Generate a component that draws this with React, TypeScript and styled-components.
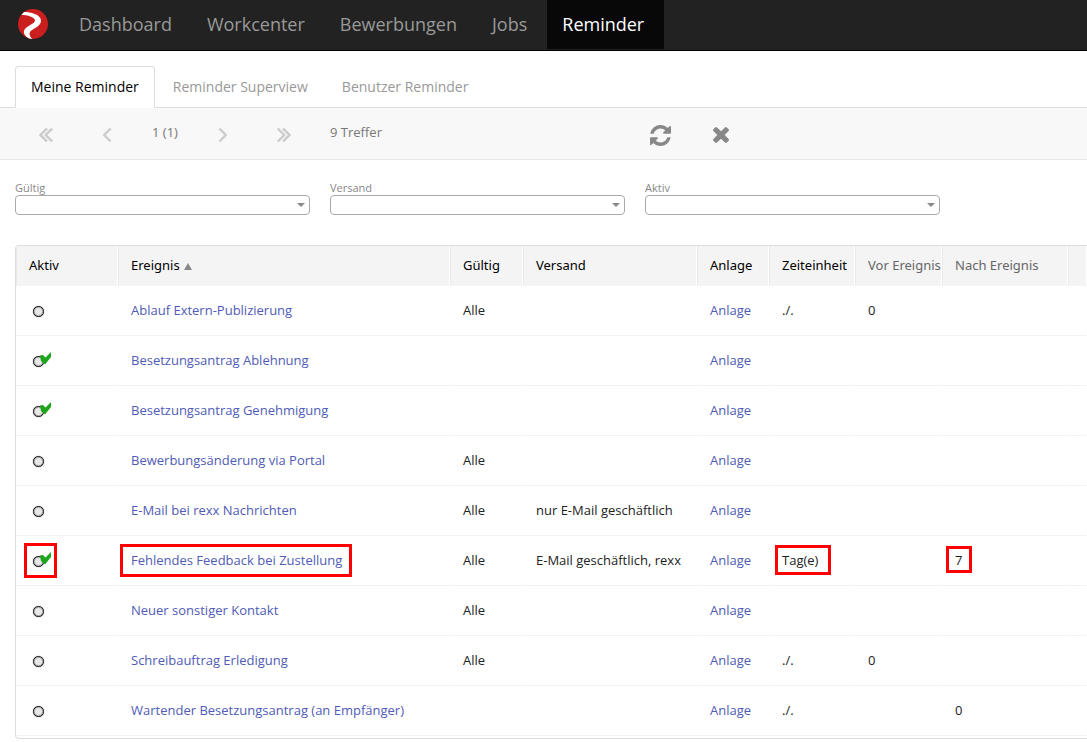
import React from "react";
import styled, { createGlobalStyle } from "styled-components";

const GlobalStyle = createGlobalStyle`
  * { box-sizing: border-box; }
  body {
    margin: 0;
    background: #fff;
    color: #222;
    font-family: "Open Sans", "Noto Sans", sans-serif;
    font-size: 13px;
    line-height: 20px;
    overflow-x: hidden;
  }
`;

const NavBar = styled.nav`
  display: flex;
  height: 51px;
  background: #222;
  border-bottom: 1px solid #000;
`;

const Brand = styled.a`
  display: flex;
  width: 64px;
  padding: 9px 0 0 18px;
`;

const NavLink = styled.a<{ $active?: boolean }>`
  height: 49px;
  padding: 0 20px 0 15px;
  font-size: 18px;
  line-height: 49px;
  font-weight: ${(p) => (p.$active ? 500 : 400)};
  text-decoration: none;
  white-space: nowrap;
  color: ${(p) => (p.$active ? "#fff" : "#999")};
  background: ${(p) => (p.$active ? "#080808" : "transparent")};
`;

const TabBar = styled.div`
  display: flex;
  gap: 2px;
  padding: 15px 15px 0;
  border-bottom: 1px solid #ddd;
`;

const Tab = styled.button<{ $active?: boolean }>`
  height: 42px;
  margin: 0 0 -1px;
  padding: 0 15px;
  border: 1px solid ${(p) => (p.$active ? "#ddd" : "transparent")};
  border-bottom-color: ${(p) => (p.$active ? "#fff" : "transparent")};
  border-radius: 4px 4px 0 0;
  background: ${(p) => (p.$active ? "#fff" : "transparent")};
  color: ${(p) => (p.$active ? "#000" : "#999")};
  font-family: inherit;
  font-size: 14px;
  line-height: 20px;
  cursor: pointer;
`;

const Toolbar = styled.div`
  display: grid;
  grid-template-columns: 62px 60px 56px 60px 62px 315px 60px 62px;
  align-items: center;
  height: 52px;
  padding: 0 15px;
  background: #f8f8f8;
  border-bottom: 1px solid #e7e7e7;
  color: #777;
`;

const IconButton = styled.button<{ $muted?: boolean }>`
  display: flex;
  align-items: center;
  justify-content: center;
  height: 52px;
  padding: 2px 0 0;
  border: 0;
  background: none;
  color: ${(p) => (p.$muted ? "#ccc" : "#888")};
  cursor: pointer;
`;

const PageInfo = styled.span`
  padding-bottom: 4px;
  text-align: center;
`;

const HitCount = styled.span`
  padding: 0 0 4px 15px;
`;

const Filters = styled.form`
  display: flex;
  gap: 20px;
  padding: 21px 15px 30px;
`;

const Filter = styled.label`
  display: block;
  flex: 0 1 295px;
  color: #888;
  font-size: 11px;
  line-height: 14px;
`;

const SelectBox = styled.span`
  display: block;
  position: relative;
`;

const Select = styled.select`
  display: block;
  width: 100%;
  height: 20px;
  padding: 0 20px 0 6px;
  border: 1px solid #aaa;
  border-radius: 4px;
  background: #fff;
  appearance: none;
`;

const SelectArrow = styled.svg`
  position: absolute;
  right: 5px;
  top: 8px;
  pointer-events: none;
`;

const TableFrame = styled.div`
  margin-left: 15px;
  padding-bottom: 2px;
  border: 1px solid #ddd;
  border-right: 0;
  border-radius: 4px 0 0 4px;
  overflow: hidden;
`;

const Table = styled.table`
  width: 100%;
  table-layout: fixed;
  border-collapse: separate;
  border-spacing: 0;
`;

const HeadCell = styled.th<{ $muted?: boolean }>`
  height: 40px;
  padding: 0 0 2px 12px;
  border-left: 1px solid #e9e9e9;
  border-right: 1px solid #fff;
  border-bottom: 1px solid #f4f4f4;
  background: #f4f4f4;
  color: ${(p) => (p.$muted ? "#666" : "#000")};
  font-family: "Noto Sans", "Open Sans", sans-serif;
  font-weight: 400;
  text-align: left;
  white-space: nowrap;
  overflow: hidden;
`;

const SortArrow = styled.svg`
  margin-left: 4px;
`;

const Cell = styled.td`
  position: relative;
  height: 50px;
  padding: 0 0 2px 13px;
  border-right: 1px solid #fff;
  border-bottom: 1px solid #f2f2f2;
  white-space: nowrap;
`;

const TableLink = styled.a`
  color: #4f5bb5;
  text-decoration: none;
`;

const Toggle = styled.span`
  display: block;
  position: relative;
  width: 12px;
  height: 12px;
  margin: 4px 0 0 4px;
`;

const ToggleInput = styled.input`
  display: block;
  width: 11px;
  height: 11px;
  margin: 0;
  border: 1px solid #222;
  border-radius: 50%;
  background: #e8e8e8;
  box-shadow: inset 0 0 0 1px #b4b4b4, 0 0 1px #444;
  appearance: none;
`;

const CheckMark = styled.svg`
  position: absolute;
  left: 7px;
  top: -4px;
  pointer-events: none;
`;

const Marker = styled.span<{ $x: number; $y: number; $w: number; $h: number }>`
  position: absolute;
  left: ${(p) => p.$x}px;
  top: ${(p) => p.$y}px;
  width: ${(p) => p.$w}px;
  height: ${(p) => p.$h}px;
  border: 3px solid #f00;
  pointer-events: none;
`;

const ANGLE =
  "M627 160q0-13-10-23l-50-50q-10-10-23-10t-23 10l-466 466q-10 10-10 23t10 23l466 466q10 10 23 10t23-10l50-50q10-10 10-23t-10-23l-393-393 393-393q10-10 10-23z";
const REFRESH =
  "M1511 480q0-5-1-7-64-268-268-434.5t-478-166.5q-146 0-282.5 55t-243.5 157l-129-129q-19-19-45-19t-45 19-19 45v448q0 26 19 45t45 19h448q26 0 45-19t19-45-19-45l-137-137q71-66 161-102t187-36q134 0 250 65t186 179q11 17 53 117 8 23 30 23h192q13 0 22.5-9.5t9.5-22.5zM1536 1280v-448q0-26-19-45t-45-19h-448q-26 0-45 19t-19 45 19 45l138 138q-148 137-349 137-134 0-250-65t-186-179q-11-17-53-117-8-23-30-23h-199q-13 0-22.5 9.5t-9.5 22.5v7q65 268 270 434.5t480 166.5q146 0 284-55.5t245-156.5l130 129q19 19 45 19t45-19 19-45z";
const TIMES =
  "M1298 214q0-40-28-68l-136-136q-28-28-68-28t-68 28l-294 294-294-294q-28-28-68-28t-68 28l-136 136q-28 28-28 68t28 68l294 294-294 294q-28 28-28 68t28 68l136 136q28 28 68 28t68-28l294-294 294 294q28 28 68 28t68-28l136-136q28-28 28-68t-28-68l-294-294 294-294q28-28 28-68z";

function Angle({ right, double }: { right?: boolean; double?: boolean }) {
  const centre = (double ? 533 : 341) * (right ? -1 : 1);
  return (
    <svg
      width="14"
      height="14"
      viewBox={`${centre - 512} -1088 1024 1024`}
      fill="currentColor"
      stroke="currentColor"
      strokeWidth="50"
    >
      <g transform={right ? "scale(-1 -1)" : "scale(1 -1)"}>
        <path d={ANGLE} />
        {double && <path d={ANGLE} transform="translate(384 0)" />}
      </g>
    </svg>
  );
}

function Logo() {
  return (
    <svg width="30" height="30" viewBox="0 0 30 30">
      <circle cx="15" cy="15" r="15" fill="#cb1f1f" />
      <path
        d="M6 3C12 3 23 5 23 12C23 18 12.500 20 11.500 24C11.500 27 13 29 14.500 30L11 29.500C7 27 5.500 25 6 22C7 17 17 15 17 11.500C17 8 9 6 3.500 6Z"
        fill="#fff"
      />
    </svg>
  );
}

type Mark = [number, number, number, number];
type Row = {
  active?: boolean;
  event: string;
  valid?: string;
  send?: string;
  unit?: string;
  before?: string;
  after?: string;
  marks?: { active: Mark; event: Mark; unit: Mark; after: Mark };
};

const rows: Row[] = [
  { event: "Ablauf Extern-Publizierung", valid: "Alle", unit: "./.", before: "0" },
  { active: true, event: "Besetzungsantrag Ablehnung" },
  { active: true, event: "Besetzungsantrag Genehmigung" },
  { event: "Bewerbungsänderung via Portal", valid: "Alle" },
  { event: "E-Mail bei rexx Nachrichten", valid: "Alle", send: "nur E-Mail geschäftlich" },
  {
    active: true,
    event: "Fehlendes Feedback bei Zustellung",
    valid: "Alle",
    send: "E-Mail geschäftlich, rexx",
    unit: "Tag(e)",
    after: "7",
    marks: {
      active: [8, 7, 33, 35],
      event: [2, 8, 232, 33],
      unit: [6, 9, 56, 30],
      after: [4, 10, 26, 27],
    },
  },
  { event: "Neuer sonstiger Kontakt", valid: "Alle" },
  { event: "Schreibauftrag Erledigung", valid: "Alle", unit: "./.", before: "0" },
  { event: "Wartender Besetzungsantrag (an Empfänger)", unit: "./.", after: "0" },
];

const widths = [102, 332, 73, 174, 72, 86, 87, 126];

function CellMarker({ mark }: { mark?: Mark }) {
  return mark ? <Marker $x={mark[0]} $y={mark[1]} $w={mark[2]} $h={mark[3]} /> : null;
}

export default function App() {
  return (
    <>
      <GlobalStyle />
      <NavBar>
        <Brand href="#" aria-label="Startseite">
          <Logo />
        </Brand>
        <NavLink href="#">Dashboard</NavLink>
        <NavLink href="#">Workcenter</NavLink>
        <NavLink href="#">Bewerbungen</NavLink>
        <NavLink href="#">Jobs</NavLink>
        <NavLink href="#" $active>
          Reminder
        </NavLink>
      </NavBar>
      <main>
        <TabBar role="tablist">
          <Tab role="tab" aria-selected $active>
            Meine Reminder
          </Tab>
          <Tab role="tab">Reminder Superview</Tab>
          <Tab role="tab">Benutzer Reminder</Tab>
        </TabBar>
        <Toolbar>
          <IconButton $muted aria-label="Erste Seite">
            <Angle double />
          </IconButton>
          <IconButton $muted aria-label="Vorige Seite">
            <Angle />
          </IconButton>
          <PageInfo>1 (1)</PageInfo>
          <IconButton $muted aria-label="Nächste Seite">
            <Angle right />
          </IconButton>
          <IconButton $muted aria-label="Letzte Seite">
            <Angle right double />
          </IconButton>
          <HitCount>9 Treffer</HitCount>
          <IconButton aria-label="Aktualisieren">
            <svg width="21" height="21" viewBox="0 -1408 1536 1536" fill="currentColor">
              <path d={REFRESH} transform="scale(1 -1)" />
            </svg>
          </IconButton>
          <IconButton aria-label="Zurücksetzen">
            <svg width="16" height="16" viewBox="110 -1170 1188 1188" fill="currentColor">
              <path d={TIMES} transform="scale(1 -1)" />
            </svg>
          </IconButton>
        </Toolbar>
        <Filters>
          {["Gültig", "Versand", "Aktiv"].map((name) => (
            <Filter key={name}>
              {name}
              <SelectBox>
                <Select>
                  <option />
                </Select>
                <SelectArrow width="8" height="4" viewBox="0 0 8 4">
                  <path d="M0 0H8L4 4Z" fill="#888" />
                </SelectArrow>
              </SelectBox>
            </Filter>
          ))}
        </Filters>
        <TableFrame>
          <Table>
            <colgroup>
              {widths.map((w, i) => (
                <col key={i} width={w} />
              ))}
              <col />
            </colgroup>
            <thead>
              <tr>
                <HeadCell>Aktiv</HeadCell>
                <HeadCell aria-sort="ascending">
                  Ereignis
                  <SortArrow width="8" height="7" viewBox="0 0 8 7">
                    <path d="M0 7L4 0L8 7Z" fill="#888" />
                  </SortArrow>
                </HeadCell>
                <HeadCell>Gültig</HeadCell>
                <HeadCell>Versand</HeadCell>
                <HeadCell>Anlage</HeadCell>
                <HeadCell>Zeiteinheit</HeadCell>
                <HeadCell $muted>Vor Ereignis</HeadCell>
                <HeadCell $muted>Nach Ereignis</HeadCell>
                <HeadCell />
              </tr>
            </thead>
            <tbody>
              {rows.map((row) => (
                <tr key={row.event}>
                  <Cell>
                    <Toggle>
                      <ToggleInput type="checkbox" defaultChecked={row.active} aria-label={row.event} />
                      {row.active && (
                        <CheckMark width="12" height="13" viewBox="0 0 12 13">
                          <path d="M0 3.500L3 3L5.500 5.500L11 0V5L5 12.500L1 9Z" fill="#1fa51b" />
                        </CheckMark>
                      )}
                    </Toggle>
                    <CellMarker mark={row.marks?.active} />
                  </Cell>
                  <Cell>
                    <TableLink href="#">{row.event}</TableLink>
                    <CellMarker mark={row.marks?.event} />
                  </Cell>
                  <Cell>{row.valid}</Cell>
                  <Cell>{row.send}</Cell>
                  <Cell>
                    <TableLink href="#">Anlage</TableLink>
                  </Cell>
                  <Cell>
                    {row.unit}
                    <CellMarker mark={row.marks?.unit} />
                  </Cell>
                  <Cell>{row.before}</Cell>
                  <Cell>
                    {row.after}
                    <CellMarker mark={row.marks?.after} />
                  </Cell>
                  <Cell />
                </tr>
              ))}
            </tbody>
          </Table>
        </TableFrame>
      </main>
    </>
  );
}
